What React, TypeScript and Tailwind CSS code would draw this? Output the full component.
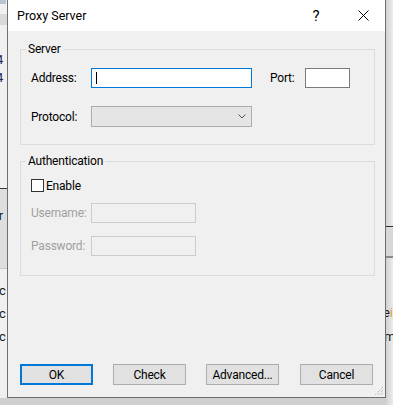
import React from "react";

function Btn({ label, primary }: { label: string; primary?: boolean }) {
  return (
    <div
      className={
        "w-[73px] h-[21px] flex items-center justify-center bg-[#e1e1e1] text-black " +
        (primary ? "border-2 border-[#0078d7]" : "border border-[#adadad]")
      }
    >
      {label}
    </div>
  );
}

export default function App() {
  return (
    <div className="relative w-[393px] h-[405px] overflow-hidden bg-[#f0f0f0] font-['Roboto',sans-serif] text-[12px] tracking-[-0.2px] leading-[16px] text-black">
      {/* background application behind the dialog */}
      <div className="absolute left-0 top-0 w-[393px] h-[405px]">
        <div className="absolute left-0 top-0 w-[6px] h-[4px] bg-[#b8c4d4]" />
        <div className="absolute left-0 top-[14px] w-[8px] h-[11px] bg-[#d9d9d9]" />
        <div className="absolute left-[-4px] top-[52px] text-[13px] text-[#1c2a5c]">4</div>
        <div className="absolute left-[-4px] top-[70px] text-[13px] text-[#1c2a5c]">4</div>
        <div className="absolute left-0 top-[188px] w-[8px] h-px bg-[#3a3a3a]" />
        <div className="absolute left-0 top-[189px] w-[8px] h-[79px] bg-[#dedede]" />
        <div className="absolute left-[-8px] top-[208px] text-[13px] text-[#1a1a1a]">er</div>
        <div className="absolute left-0 top-[268px] w-[8px] h-px bg-[#c8c8c8]" />
        <div className="absolute left-[-1px] top-[283px] text-[13px] text-[#1a1a1a]">c</div>
        <div className="absolute left-[-1px] top-[306px] text-[13px] text-[#1a1a1a]">c</div>
        <div className="absolute left-[-1px] top-[329px] text-[13px] text-[#1a1a1a]">c</div>
        <div className="absolute left-0 top-[398px] w-[393px] h-[7px] bg-[#cfcfcf]" />
        <div className="absolute left-[386px] top-0 w-[7px] h-[405px] bg-gradient-to-r from-[#d2d2d2] to-[#ececec]" />
        <div className="absolute left-[386px] top-[226px] w-[7px] h-px bg-[#2e2e2e]" />
        <div className="absolute left-[386px] top-[228px] w-[7px] h-[28px] bg-[#d8d8d8]" />
        <div className="absolute left-[386px] top-[256px] w-[7px] h-[2px] bg-[#8a8a8a]" />
        <div className="absolute left-[383px] top-[305px] text-[13px] text-[#1a1a1a]">
          e<span className="text-[#e0a030]">i</span>
        </div>
        <div className="absolute left-[384px] top-[329px] text-[13px] text-[#1a1a1a]">m</div>
      </div>

      {/* dialog window */}
      <div className="absolute left-[7px] top-0 w-[379px] h-[398px] border-l border-r border-b border-[#6f6f6f] bg-[#f0f0f0] flex flex-col">
        {/* title bar */}
        <div className="h-[31px] bg-white flex items-center shrink-0">
          <span className="ml-[9px] text-[12.5px] tracking-normal">Proxy Server</span>
          <span className="ml-auto mr-[2px] w-[20px] text-center text-[15px] leading-[16px]">?</span>
          <svg className="ml-[30px] mr-[16px]" width="11" height="11" viewBox="0 0 11 11">
            <path d="M0.5 0.5 L10.5 10.5 M10.5 0.5 L0.5 10.5" stroke="#000" strokeWidth="1" fill="none" />
          </svg>
        </div>

        {/* body */}
        <div className="flex-1 flex flex-col pl-[12px] pr-[10px]">
          {/* Server group */}
          <div className="relative mt-[18px] h-[96px] border border-[#dcdcdc] pl-[10px] pt-[18px]">
            <span className="absolute left-[5px] top-[-9px] px-[2px] bg-[#f0f0f0]">Server</span>
            <div className="flex items-center h-[20px]">
              <span className="w-[60px]">Address:</span>
              <div className="w-[161px] h-[20px] border border-[#0078d7] bg-white flex items-center pl-[4px]">
                <div className="w-px h-[12px] bg-black" />
              </div>
              <span className="ml-[18px] w-[35px]">Port:</span>
              <div className="w-[45px] h-[20px] border border-[#7a7a7a] bg-white" />
            </div>
            <div className="flex items-center h-[21px] mt-[18px]">
              <span className="w-[60px]">Protocol:</span>
              <div className="w-[161px] h-[21px] border border-[#adadad] bg-[#e5e5e5] flex items-center justify-end pr-[5px]">
                <svg width="8" height="5" viewBox="0 0 8 5">
                  <path d="M0.5 0.5 L4 4 L7.5 0.5" stroke="#555" strokeWidth="1" fill="none" />
                </svg>
              </div>
            </div>
          </div>

          {/* Authentication group */}
          <div className="relative mt-[16px] h-[115px] border border-[#dcdcdc] pl-[10px] pt-[17px]">
            <span className="absolute left-[5px] top-[-9px] px-[2px] bg-[#f0f0f0]">Authentication</span>
            <div className="flex items-center h-[13px]">
              <div className="w-[13px] h-[13px] border border-[#333333] bg-white" />
              <span className="ml-[2px]">Enable</span>
            </div>
            <div className="flex items-center h-[20px] mt-[11px] text-[#a0a0a0]">
              <span className="w-[60px]">Username:</span>
              <div className="w-[105px] h-[20px] border border-[#cccccc] bg-[#f0f0f0]" />
            </div>
            <div className="flex items-center h-[20px] mt-[13px] text-[#a0a0a0]">
              <span className="w-[60px]">Password:</span>
              <div className="w-[105px] h-[20px] border border-[#cccccc] bg-[#f0f0f0]" />
            </div>
          </div>

          {/* buttons */}
          <div className="flex items-center gap-[20px] mt-[88px]">
            <Btn label="OK" primary />
            <Btn label="Check" />
            <Btn label="Advanced..." />
            <div className="ml-px">
              <Btn label="Cancel" />
            </div>
          </div>
        </div>

        {/* resize grip */}
        <svg className="absolute right-[1px] bottom-[1px]" width="11" height="11" viewBox="0 0 11 11">
          <path d="M10 2 L2 10 M10 5 L5 10 M10 8 L8 10" stroke="#a8a8a8" strokeWidth="1" strokeDasharray="1 1" fill="none" />
        </svg>
      </div>
    </div>
  );
}
